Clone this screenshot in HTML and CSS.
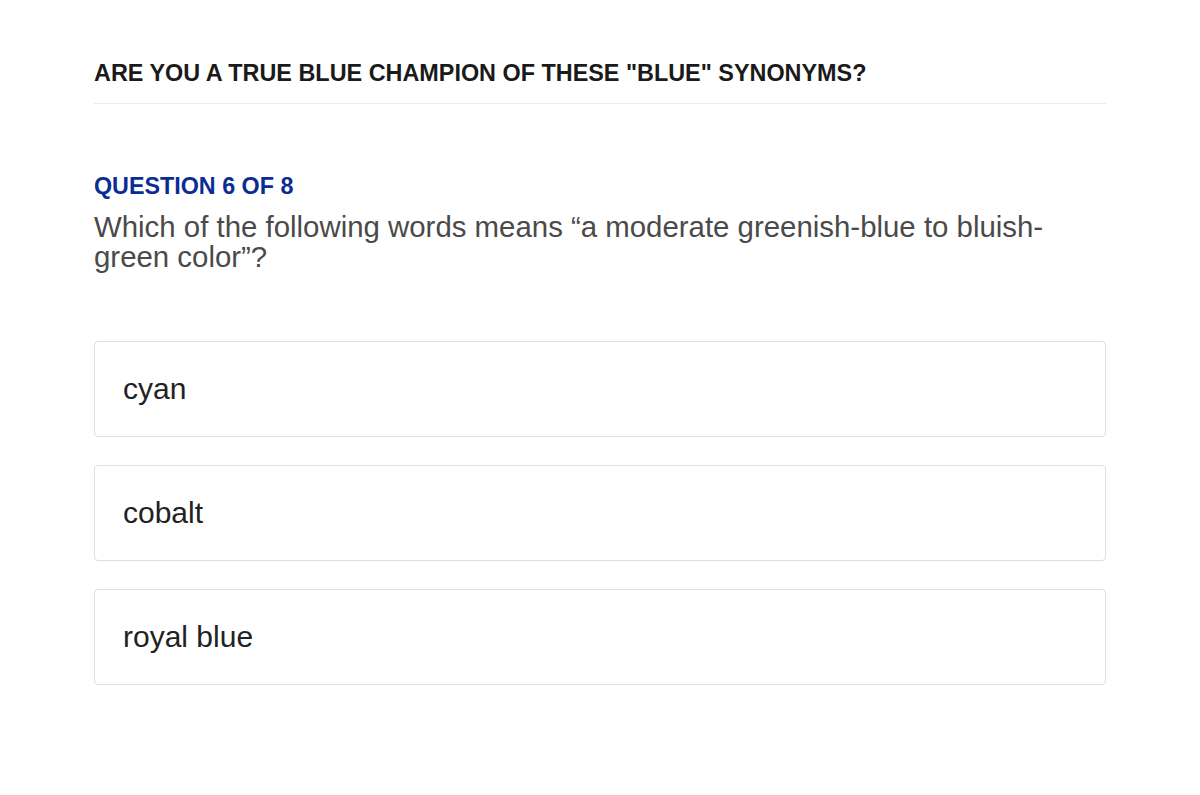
FILE: index.html
```html
<!DOCTYPE html>
<html lang="en">
<head>
<meta charset="utf-8">
<title>Blue Synonyms Quiz</title>
<link rel="stylesheet" href="styles.css">
</head>
<body>
<main class="quiz">
  <header class="quiz-header">
    <h1 class="quiz-title">ARE YOU A TRUE BLUE CHAMPION OF THESE "BLUE" SYNONYMS?</h1>
  </header>
  <section class="question">
    <div class="question-count">QUESTION 6 OF 8</div>
    <p class="question-text">Which of the following words means “a moderate greenish-blue to bluish-green color”?</p>
    <ul class="options">
      <li class="option">cyan</li>
      <li class="option">cobalt</li>
      <li class="option">royal blue</li>
    </ul>
  </section>
</main>
</body>
</html>
```

FILE: styles.css
```css
html, body {
  margin: 0;
  padding: 0;
  background: #fff;
}

body {
  font-family: "Liberation Sans", Arial, sans-serif;
}

.quiz {
  width: 1012px;
  margin: 0 auto;
  padding-top: 59px;
}

.quiz-header {
  border-bottom: 1px solid #ececec;
  padding-bottom: 16px;
}

.quiz-title {
  margin: 0;
  font-size: 23.4px;
  line-height: 28px;
  font-weight: bold;
  color: #1a1a1a;
}

.question {
  padding-top: 68px;
}

.question-count {
  font-size: 23.3px;
  line-height: 28px;
  font-weight: bold;
  color: #0a2d94;
}

.question-text {
  margin: 12px 0 0;
  font-size: 29.4px;
  line-height: 30px;
  color: #4a4a4a;
  max-width: 1000px;
}

.options {
  list-style: none;
  margin: 69px 0 0;
  padding: 0;
  display: flex;
  flex-direction: column;
  gap: 28px;
}

.option {
  border: 1px solid #dedede;
  border-radius: 4px;
  height: 96px;
  box-sizing: border-box;
  padding: 0 28px;
  display: flex;
  align-items: center;
  font-size: 30px;
  color: #222;
}
```
